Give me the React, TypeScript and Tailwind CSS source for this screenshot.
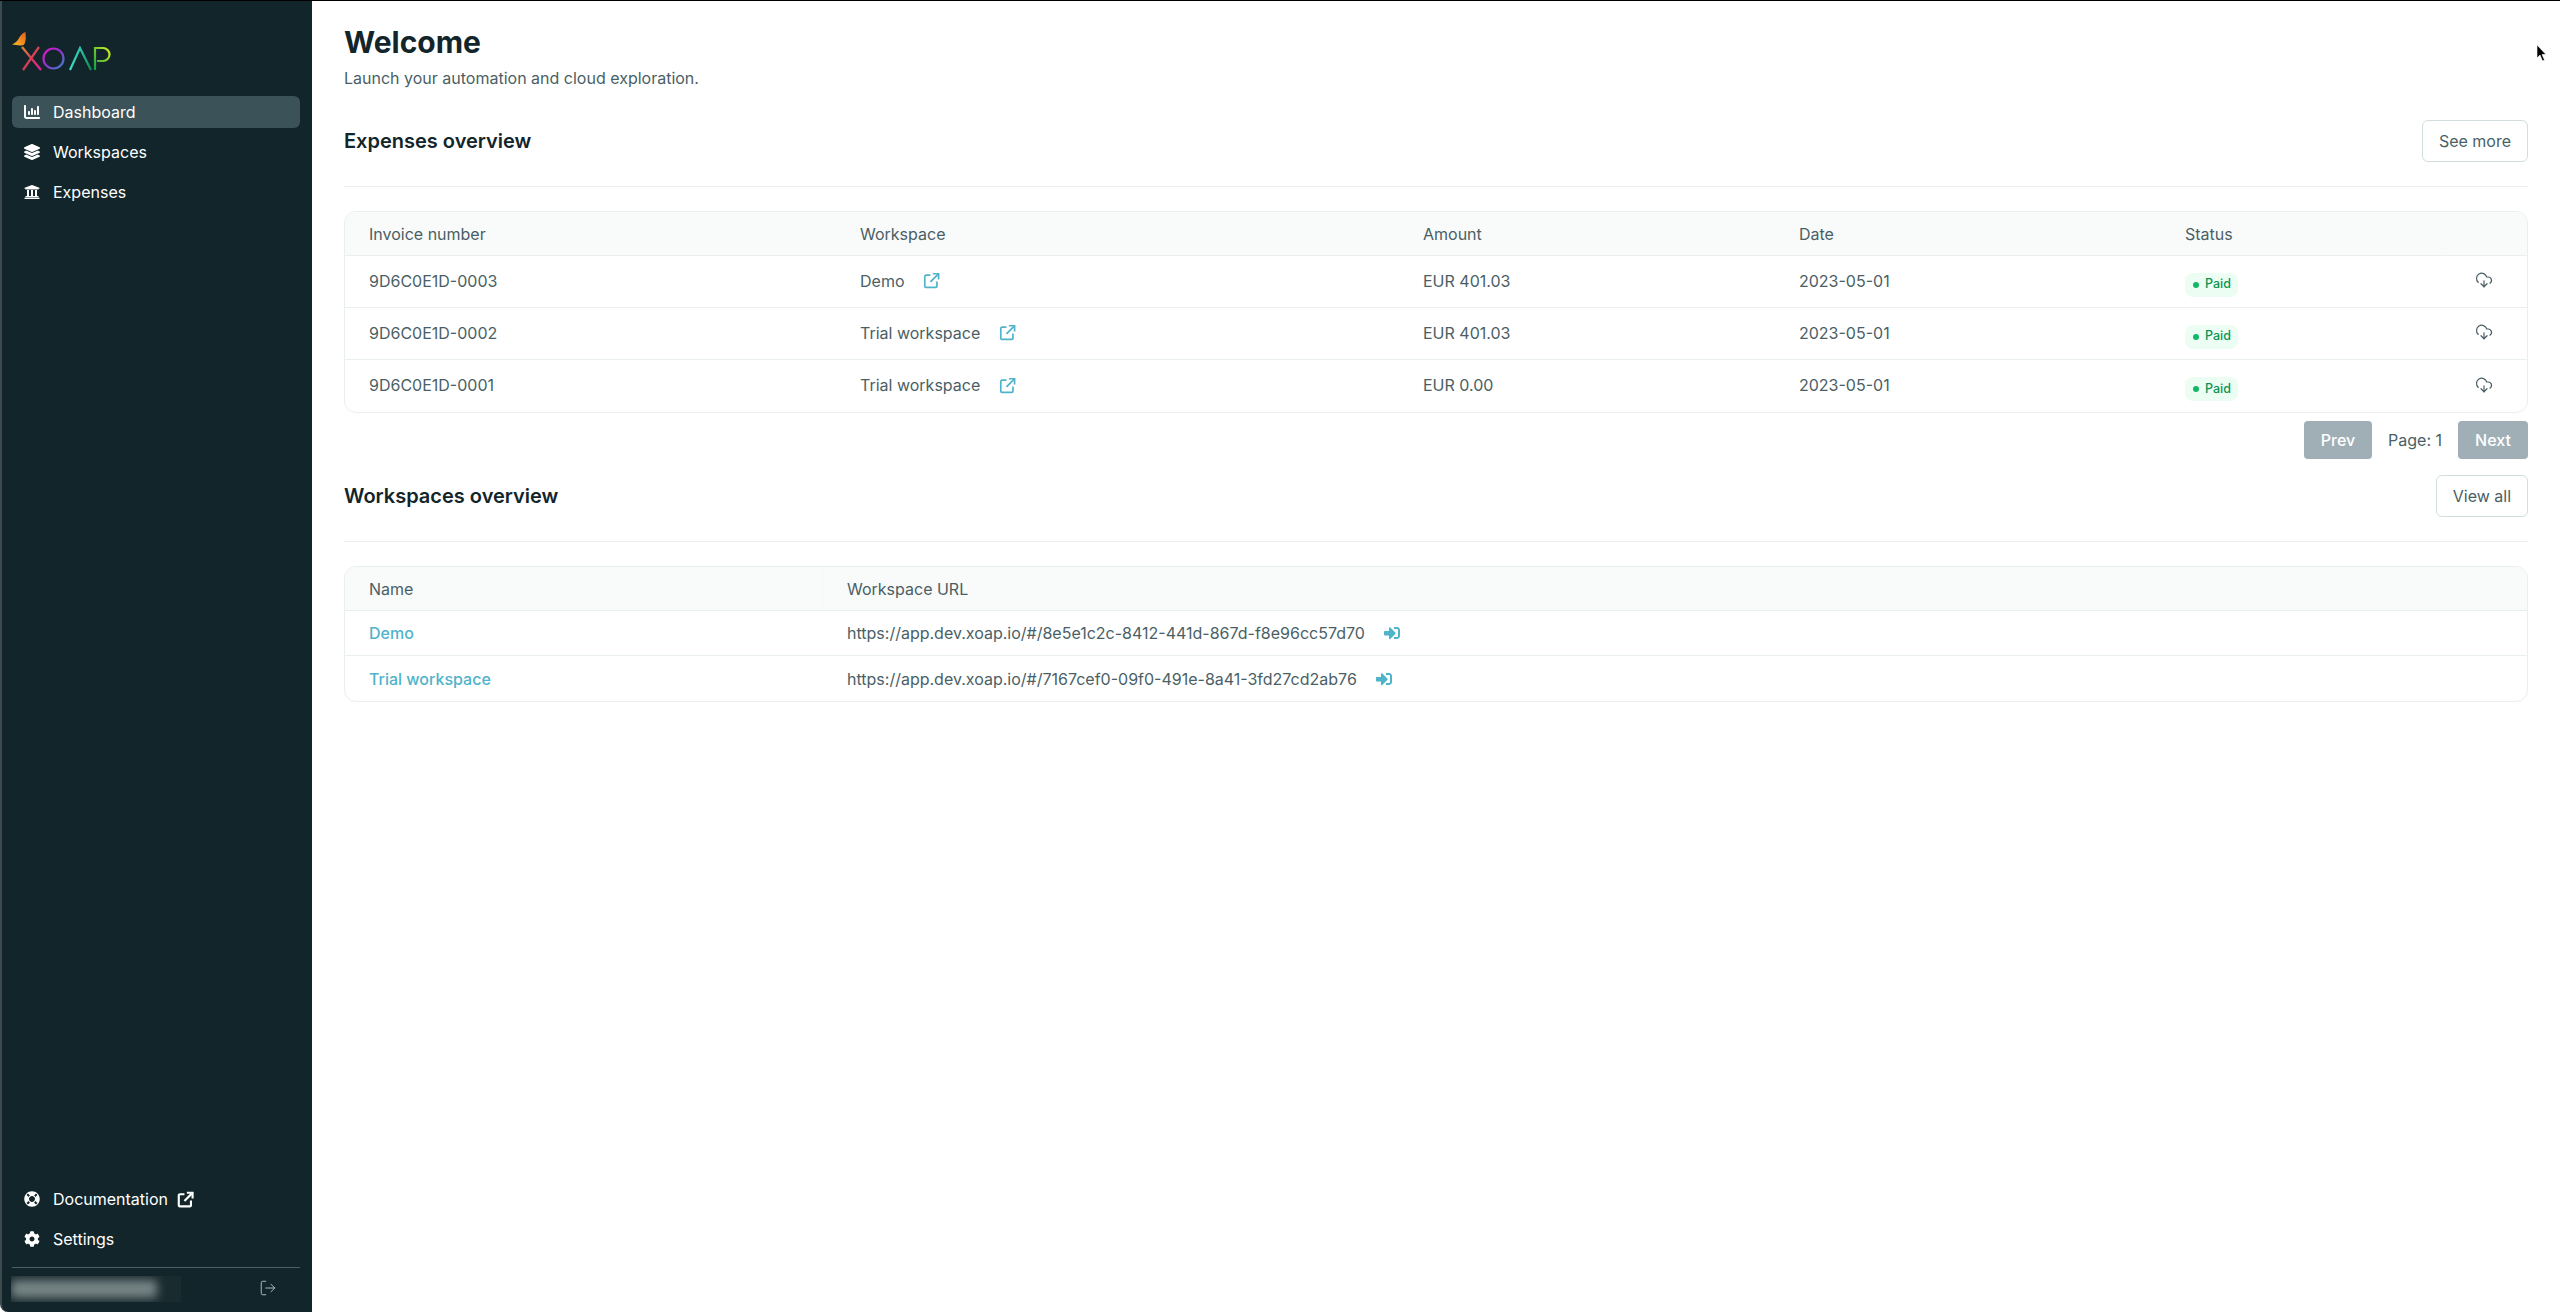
import React from "react";
import { FaLayerGroup, FaUniversity, FaLifeRing, FaCog, FaSignInAlt } from "react-icons/fa";
import { FaChartColumn } from "react-icons/fa6";
import { CloudDownload, LogOut } from "lucide-react";

function ExternalIcon({ color, size = 17, stroke = 2.4, className }: { color: string; size?: number; stroke?: number; className?: string }) {
  return (
    <svg width={size} height={size} viewBox="0 0 24 24" fill="none" stroke={color} strokeWidth={stroke} className={className}>
      <path d="M10.5 4.5H4.2A1.7 1.7 0 0 0 2.5 6.2V20a1.7 1.7 0 0 0 1.7 1.7H18a1.7 1.7 0 0 0 1.7-1.7v-6.5" />
      <path d="M10.5 14 21.5 3" />
      <path d="M14 2.5h8v8" />
    </svg>
  );
}

function NavItem({ icon, label, active, extra }: { icon: React.ReactNode; label: string; active?: boolean; extra?: React.ReactNode }) {
  return (
    <a className={`flex h-8 items-center rounded-md pl-3 text-[16px] font-normal text-white ${active ? "bg-[#3b5258]" : ""}`}>
      <span className="flex w-[29px] shrink-0 items-center">{icon}</span>
      <span>{label}</span>
      {extra}
    </a>
  );
}

function Logo() {
  return (
    <svg width="110" height="50" viewBox="0 0 110 50" className="block" fill="none">
      <defs>
        <linearGradient id="lx" x1="0" y1="0" x2="1" y2="1">
          <stop offset="0" stopColor="#d98a3c" />
          <stop offset="0.5" stopColor="#d83c58" />
          <stop offset="1" stopColor="#e61fa8" />
        </linearGradient>
        <linearGradient id="lo" x1="0" y1="0" x2="1" y2="1">
          <stop offset="0" stopColor="#e815c8" />
          <stop offset="0.5" stopColor="#8a35c8" />
          <stop offset="1" stopColor="#3c86c8" />
        </linearGradient>
        <linearGradient id="la" x1="0" y1="1" x2="1" y2="1">
          <stop offset="0" stopColor="#40d8c8" />
          <stop offset="0.55" stopColor="#2cc0a0" />
          <stop offset="1" stopColor="#0f8a50" />
        </linearGradient>
        <linearGradient id="lp" x1="0" y1="1" x2="1" y2="0">
          <stop offset="0" stopColor="#10a040" />
          <stop offset="1" stopColor="#d8f020" />
        </linearGradient>
        <linearGradient id="lb" x1="0" y1="1" x2="1" y2="0">
          <stop offset="0" stopColor="#f8c020" />
          <stop offset="1" stopColor="#e85a20" />
        </linearGradient>
      </defs>
      <path d="M0 12.5 Q5 10 7 6 Q10 1 13.5 0 Q14.5 6 13 11 Q12 14 8 13.5 Z" fill="url(#lb)" />
      <path d="M10 15 L29 38 M27 15 L11 38" stroke="url(#lx)" strokeWidth="2.2" />
      <circle cx="41.5" cy="26.5" r="10" stroke="url(#lo)" strokeWidth="2.2" />
      <path d="M58 38 L68 16 L79 38" stroke="url(#la)" strokeWidth="2.2" />
      <path d="M83 38 V16 H91 A6.5 6.5 0 0 1 91 29 H85" stroke="url(#lp)" strokeWidth="2.2" />
    </svg>
  );
}

function SectionHeader({ title, action }: { title: string; action: string }) {
  return (
    <div className="flex items-center justify-between border-b border-[#e9eeef] pb-6">
      <h2 className="text-[20px] font-semibold leading-7 text-[#12252a]">{title}</h2>
      <button className="h-[42px] rounded-md border border-[#d3dde0] bg-white px-4 text-[16px] text-[#4a5f65]">{action}</button>
    </div>
  );
}

const invoices = [
  { id: "9D6C0E1D-0003", ws: "Demo", amount: "EUR 401.03" },
  { id: "9D6C0E1D-0002", ws: "Trial workspace", amount: "EUR 401.03" },
  { id: "9D6C0E1D-0001", ws: "Trial workspace", amount: "EUR 0.00" },
];

const workspaces = [
  { name: "Demo", url: "https://app.dev.xoap.io/#/8e5e1c2c-8412-441d-867d-f8e96cc57d70" },
  { name: "Trial workspace", url: "https://app.dev.xoap.io/#/7167cef0-09f0-491e-8a41-3fd27cd2ab76" },
];

const thClass = "h-[44px] border-b border-[#e9eeef] pl-6 text-left text-[16px] font-normal text-[#4a5f65]";
const thDivided = "h-[44px] border-b border-l border-b-[#e9eeef] border-l-[#f7f9f9] pl-[23px] text-left text-[16px] font-normal text-[#4a5f65]";

export default function App() {
  return (
    <div
      className="flex h-screen w-full overflow-hidden border-t border-black bg-white text-[16px] text-[#4a5f65]"
      style={{ fontFamily: "Inter, 'Liberation Sans', sans-serif" }}
    >
      <aside className="flex w-[312px] shrink-0 flex-col rounded-bl-lg border-l-2 border-[#3d4a4e] bg-[#12252a] pr-3 pl-2.5">
        <div className="h-[95px] pt-[31px]">
          <Logo />
        </div>
        <nav className="flex flex-col gap-2">
          <NavItem active icon={<FaChartColumn size={16} color="#ffffff" />} label="Dashboard" />
          <NavItem icon={<FaLayerGroup size={16} color="#ffffff" />} label="Workspaces" />
          <NavItem icon={<FaUniversity size={16} color="#ffffff" />} label="Expenses" />
        </nav>
        <div className="mt-auto flex flex-col gap-2">
          <NavItem
            icon={<FaLifeRing size={16} color="#ffffff" />}
            label="Documentation"
            extra={<ExternalIcon color="#ffffff" stroke={3} className="ml-[9px]" />}
          />
          <NavItem icon={<FaCog size={16} color="#ffffff" />} label="Settings" />
        </div>
        <div className="mt-3 flex h-[45px] items-start justify-between border-t border-[#4a6066] pt-[8px]">
          <div className="-ml-px h-[26px] w-[170px] overflow-hidden bg-[#1a2b30]">
            <div className="mt-1 h-[18px] w-[146px] rounded-sm bg-[#768484] blur-[5px]" />
          </div>
          <LogOut size={18} strokeWidth={1.25} color="#b4c2c5" className="mt-[3px] mr-[23px]" />
        </div>
      </aside>

      <main className="min-w-0 flex-1 px-8 pt-[23px]">
        <h1 className="text-[30px] font-bold leading-9 text-[#12252a]">Welcome</h1>
        <p className="mt-1.5 text-[16px] leading-6 text-[#4a5f65]">Launch your automation and cloud exploration.</p>

        <section className="mt-[30px]">
          <SectionHeader title="Expenses overview" action="See more" />
          <div className="mt-6 overflow-hidden rounded-xl border border-[#e9eeef]">
            <table className="w-full table-fixed border-separate border-spacing-0">
              <colgroup>
                <col className="w-[491px]" />
                <col className="w-[563px]" />
                <col className="w-[376px]" />
                <col className="w-[386px]" />
                <col className="w-[281px]" />
                <col />
              </colgroup>
              <thead className="bg-[#f9fafa]">
                <tr>
                  <th className={thClass}>Invoice number</th>
                  <th className={thClass}>Workspace</th>
                  <th className={thClass}>Amount</th>
                  <th className={thClass}>Date</th>
                  <th className={thClass}>Status</th>
                  <th className={thDivided} />
                </tr>
              </thead>
              <tbody>
                {invoices.map((r, i) => {
                  const line = i < 2 ? "border-b border-[#e9eeef]" : "";
                  return (
                    <tr key={r.id}>
                      <td className={`h-[52px] pb-[2px] pl-6 ${line}`}>{r.id}</td>
                      <td className={`pb-[2px] pl-6 ${line}`}>
                        <span className="flex items-center gap-[19px]">
                          {r.ws}
                          <ExternalIcon color="#4fb3c9" />
                        </span>
                      </td>
                      <td className={`pb-[2px] pl-6 ${line}`}>{r.amount}</td>
                      <td className={`pb-[2px] pl-6 ${line}`}>2023-05-01</td>
                      <td className={`pl-6 ${line}`}>
                        <span className="mt-[6px] flex h-6 w-[53px] items-center gap-[6px] rounded-lg bg-[#ecfdf3] pl-2 text-[12.5px] font-medium text-[#079455]">
                          <span className="h-1.5 w-1.5 rounded-full bg-[#12b76a]" />
                          Paid
                        </span>
                      </td>
                      <td className={`pl-[33px] ${line}`}>
                        <CloudDownload size={18} strokeWidth={1.6} color="#4a5f65" className="-mt-[3px]" />
                      </td>
                    </tr>
                  );
                })}
              </tbody>
            </table>
          </div>
          <div className="mt-2 flex items-center justify-end">
            <button className="h-[38px] w-[68px] rounded bg-[#a0afb6] text-[16px] font-medium text-white">Prev</button>
            <span className="mx-4 text-[16px]">Page: 1</span>
            <button className="h-[38px] w-[70px] rounded bg-[#a0afb6] text-[16px] font-medium text-white">Next</button>
          </div>
        </section>

        <section className="mt-4">
          <SectionHeader title="Workspaces overview" action="View all" />
          <div className="mt-6 overflow-hidden rounded-xl border border-[#e9eeef]">
            <table className="w-full table-fixed border-separate border-spacing-0">
              <colgroup>
                <col className="w-[478px]" />
                <col />
              </colgroup>
              <thead className="bg-[#f9fafa]">
                <tr>
                  <th className={thClass}>Name</th>
                  <th className={thDivided}>Workspace URL</th>
                </tr>
              </thead>
              <tbody>
                {workspaces.map((w, i) => {
                  const line = i < 1 ? "border-b border-[#e9eeef]" : "";
                  return (
                    <tr key={w.name}>
                      <td className={`h-[45px] pl-6 font-medium text-[#4fb3c9] ${line}`}>{w.name}</td>
                      <td className={`pl-6 ${line}`}>
                        <span className="flex items-center gap-[19px]">
                          {w.url}
                          <FaSignInAlt size={16} color="#4fb3c9" />
                        </span>
                      </td>
                    </tr>
                  );
                })}
              </tbody>
            </table>
          </div>
        </section>
      </main>

      <svg className="absolute top-[44px] left-[2536px]" width="12" height="18" viewBox="0 0 12 18">
        <path d="M1 1 V14 L4 11 L6.5 17 L8.5 16 L6 10.5 H10 Z" fill="#000" stroke="#fff" strokeWidth="0.6" />
      </svg>
    </div>
  );
}
